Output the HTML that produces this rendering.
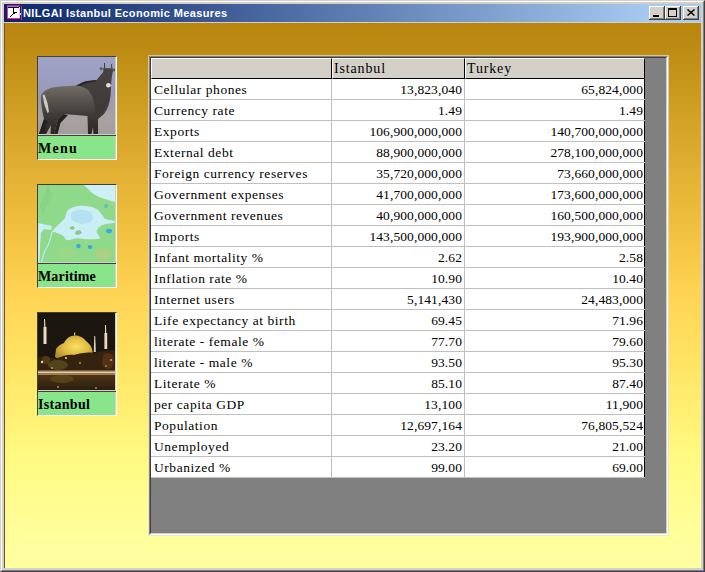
<!DOCTYPE html>
<html><head><meta charset="utf-8">
<style>
*{box-sizing:border-box;margin:0;padding:0}
html,body{width:705px;height:572px;overflow:hidden;background:#D4D0C8}
#win{position:absolute;left:0;top:0;width:705px;height:572px;background:#D4D0C8;
 border-top:1px solid #D4D0C8;border-left:1px solid #D4D0C8;border-right:1px solid #404040;border-bottom:1px solid #404040}
#win2{position:absolute;left:1px;top:1px;width:703px;height:570px;border-top:1px solid #FFFFFF;border-left:1px solid #FFFFFF;border-right:1px solid #808080;border-bottom:1px solid #808080}
#title{position:absolute;left:4px;top:4px;width:697px;height:18px;background:linear-gradient(to right,#0A246A 0%,#A6CAF0 93%)}
#ttext{position:absolute;left:23px;top:7px;height:18px;line-height:18px;font:bold 11px "Liberation Sans",sans-serif;letter-spacing:0.38px;color:#fff;white-space:nowrap}
.cb{position:absolute;top:6px;width:16px;height:14px;background:#D4D0C8;
 box-shadow:inset -1px -1px 0 #404040, inset 1px 1px 0 #FFFFFF, inset -2px -2px 0 #808080}
#client{position:absolute;left:4px;top:23px;width:697px;height:545px;
 background:linear-gradient(to bottom,#B8860E 0px,#BC8A12 22px,#CE9E22 82px,#DDAB30 132px,#EEBC3C 192px,#FFD455 272px,#FFE464 342px,#FFFA80 432px,#FFFF9E 522px,#FFFFA2 545px)}
#lline{position:absolute;left:4px;top:23px;width:1px;height:545px;background:#7A5020}
.panel{position:absolute;left:37px;width:80px;height:104px;border-top:1px solid #404040;border-left:1px solid #404040;border-right:1px solid #FFFFFF;border-bottom:1px solid #FFFFFF}
.pimg{position:absolute;left:0;top:0;width:77px;height:77px;overflow:hidden}
.psep{position:absolute;left:0;top:77px;width:78px;height:1px;background:#D4D0C8}
.psep2{position:absolute;left:0;top:78px;width:78px;height:1px;background:#404040}
.plab{position:absolute;left:0;top:79px;width:77px;height:23px;background:#89E58A;font:bold 14px "Liberation Serif",serif;color:#000;padding-left:0;padding-top:1px;line-height:23px}
.pright{position:absolute;left:77px;top:0;width:1px;height:102px;background:#D4D0C8}
#sp{position:absolute;left:148px;top:55px;width:521px;height:481px;border:1px solid rgba(226,222,212,0.72)}
#sp2{position:absolute;left:0;top:0;width:519px;height:479px;border-top:1px solid #808080;border-left:1px solid #808080;border-right:1px solid #FFFFFF;border-bottom:1px solid #FFFFFF}
#sp3{position:absolute;left:0;top:0;width:517px;height:477px;border-top:1px solid #404040;border-left:1px solid #404040;border-right:1px solid #D4D0C8;border-bottom:1px solid #D4D0C8}
#vp{position:absolute;left:0;top:0;width:515px;height:475px;background:#808080;overflow:hidden}
.h{position:absolute;top:0;height:21px;background:#D4D0C8;border-top:1px solid #fff;border-left:1px solid #fff;border-right:1px solid #000;border-bottom:1px solid #000;font:14px "Liberation Serif",serif;color:#000;line-height:20px;padding-left:1px;letter-spacing:0.85px;white-space:nowrap}
#body{position:absolute;left:0;top:21px;width:494px;height:399px;background:#fff;border-right:1px solid #000;border-bottom:1px solid #000}
.r{position:absolute;left:0;width:494px;height:21px}
.r>div{position:absolute;top:0;height:21px;border-bottom:1px solid #C0C0C0;font:13.5px "Liberation Serif",serif;color:#000;line-height:21px;padding-top:0px;white-space:nowrap}
.c0{left:0;width:181px;border-right:1px solid #C0C0C0;padding-left:3px;letter-spacing:0.55px}
.c1{left:181px;width:133px;border-right:1px solid #C0C0C0;text-align:right;padding-right:2px;letter-spacing:0.1px}
.c2{left:314px;width:180px;text-align:right;padding-right:2px;letter-spacing:0.1px}
</style></head><body>
<div id="win"></div><div id="win2"></div>
<div id="title"></div>
<div id="ttext">NILGAI Istanbul Economic Measures</div>
<svg style="position:absolute;left:5px;top:5px" width="17" height="16" viewBox="0 0 17 16" shape-rendering="crispEdges">
 <rect x="1" y="0" width="15" height="15" fill="#5A005A"/>
 <rect x="2" y="0" width="13" height="1" fill="#A030A0"/>
 <rect x="2" y="1" width="12" height="1" fill="#C060C0"/>
 <rect x="2" y="1" width="1" height="12" fill="#B050B0"/>
 <rect x="3" y="2" width="11" height="11" fill="#FFFFFF"/>
 <rect x="3" y="2" width="11" height="1" fill="#101010"/>
 <rect x="2" y="13" width="13" height="1" fill="#B040B0"/>
 <rect x="8" y="3" width="1" height="4" fill="#000"/>
 <rect x="8" y="7" width="2" height="2" fill="#000"/>
 <rect x="10" y="7" width="2" height="1" fill="#000"/>
 <rect x="7" y="9" width="1" height="1" fill="#000"/>
 <rect x="6" y="10" width="1" height="1" fill="#000"/>
 <rect x="5" y="11" width="1" height="1" fill="#000"/>
 <rect x="14" y="2" width="1" height="11" fill="#E8C8E8"/>
 <rect x="15" y="8" width="1" height="2" fill="#F0B0D0"/>
 <rect x="16" y="1" width="1" height="14" fill="#5A6AA0"/>
</svg>
<div class="cb" style="left:649px"><div style="position:absolute;left:4px;top:9px;width:6px;height:2px;background:#000"></div></div>
<div class="cb" style="left:665px"><div style="position:absolute;left:3px;top:2px;width:9px;height:9px;border:1px solid #000;border-top-width:2px"></div></div>
<div class="cb" style="left:683px"><svg style="position:absolute;left:4px;top:3px" width="8" height="7" viewBox="0 0 8 7"><path d="M0.5 0.5 L7.5 6.5 M7.5 0.5 L0.5 6.5" stroke="#000" stroke-width="1.5"/></svg></div>
<div id="client"></div>
<div id="lline"></div>

<div class="panel" style="top:56px">
 <div class="pimg" id="img1">
  <svg width="77" height="77" viewBox="0 0 77 77">
   <defs>
    <linearGradient id="sky" x1="0" y1="0" x2="0" y2="1"><stop offset="0" stop-color="#A0A2C8"/><stop offset="0.3" stop-color="#9A9DC0"/><stop offset="0.45" stop-color="#979ABA"/><stop offset="0.6" stop-color="#A09CA8"/><stop offset="0.8" stop-color="#A8A2A2"/><stop offset="1" stop-color="#A29C9C"/></linearGradient>
    <linearGradient id="bod" x1="0" y1="0" x2="0" y2="1"><stop offset="0" stop-color="#8C867E"/><stop offset="0.3" stop-color="#6E6962"/><stop offset="0.7" stop-color="#403C39"/><stop offset="1" stop-color="#2A2624"/></linearGradient>
   </defs>
   <rect width="77" height="77" fill="url(#sky)"/>
   <path d="M3 38 C7 32 14 30 22 29.5 L38 28.6 C42 26 46 24 50 23.9 L58.5 23.2 C61 20 63.5 17 65.3 15 L65.3 10.9 L75.2 11.6 L74.5 16 L73.4 22.5 L72.4 39 C72 46 70 52 66 57 L60 62 L60 77 L55.5 77 L55 70 L53.5 77 L50 77 L49.5 59 L38 58 L25 57 L20 62 L16 77 L12.5 77 L13 68 L8 77 L1 77 L6 62 L4 52 L3 44 Z" fill="url(#bod)"/>
   <path d="M38 28.8 C44 26 48 24 52 24 L58.5 23.2 L65.3 15 L65.3 10.9 L75.2 11.6 L73.4 22.5 L72.4 39 C71 46 68 52 64 57 L57 59 C58 50 56 40 50 33 C46 30 42 29 38 28.8 Z" fill="#3C3836" opacity="0.85"/>
   <path d="M39 28.5 C43 26 47 24 51 23.7 L58 23 L58 24.5 C52 25 47 26.5 42 29 Z" fill="#2A2624"/>
   <path d="M66.5 6 L66.6 11 M73.4 7.2 L73.8 11" stroke="#3C3C44" stroke-width="1"/>
   <ellipse cx="63.2" cy="11.8" rx="1.6" ry="1.8" fill="#666462"/>
   <ellipse cx="75.8" cy="13" rx="1.4" ry="1.6" fill="#5A5856"/>
   <path d="M4.5 38 L6.5 37.5 L9.5 46 L11 55 L9.5 56 L6.5 48 Z" fill="#CCC8C2"/>
   <ellipse cx="70.4" cy="28.3" rx="2.4" ry="2.3" fill="#E2DED6"/>
   <path d="M16 77 L20 62 L25 57 L30 58 L22.5 66 L19.5 77 Z M1 77 L6 62 L10 64 L5 77 Z" fill="#262220"/>
  </svg>
 </div>
 <div class="pright"></div>
 <div class="psep"></div><div class="psep2"></div>
 <div class="plab" style="letter-spacing:1.3px">Menu</div>
</div>

<div class="panel" style="top:184px">
 <div class="pimg" id="img2">
  <svg width="77" height="77" viewBox="0 0 77 77">
   <rect width="77" height="77" fill="#8FD98A"/>
   <path d="M10 0 L14 10 L8 22 L4 30 L2 20 Z" fill="#82CE88" opacity="0.5"/>
   <path d="M46 0 L77 0 L77 17 C72 16 68 14 64 13 C60 12 55 9 52 6 Z" fill="#CDF0F6"/>
   <path d="M28.8 26.7 C30 24 36 21.5 41 21 C45 20.5 52 20.5 58 23.8 C61 25 64 30 66.8 33.8 C70 35 74 35.5 77 36 L77 38 C73 38 66 39 62.5 41 C60 43 58 45 59 48 C60 50 62 52 62.5 53.2 C58 54.5 50 55 41 53.2 C36 53 32 55 29.5 55.3 C27 54 26 53 26.7 52.5 L24 50 C20 48 17 47 13.8 46.7 L16 44 C20 40 24 36 26.7 33.8 Z" fill="#CBEEF6"/>
   <path d="M33 28 C38 24 46 24 52 27 C56 30 56 36 50 38 C44 40 36 38 33 34 Z" fill="#AEDCF0" opacity="0.8"/>
   <path d="M0 38 L14 41 L13 45 L6 44 L3 48 L2 62 L1.5 77 L0 77 Z" fill="#C8EEF6"/>
   <path d="M14 47 L11 58 L6 68 L3.5 77" stroke="#C0E8F0" stroke-width="1.2" fill="none"/>
   <path d="M32 42 L35 41 L37 43 L35 45 L32 44 Z M38 46 L42 45 L44 48 L40 50 L37 49 Z" fill="#88C888"/>
   <ellipse cx="71" cy="46" rx="3" ry="2.3" fill="#3AA8E4"/>
   <ellipse cx="40.5" cy="61" rx="2.2" ry="2.3" fill="#3AA4E0"/>
   <ellipse cx="52" cy="62" rx="2.3" ry="2.1" fill="#3AA4E0"/>
   <ellipse cx="68" cy="21" rx="1.8" ry="2.2" fill="#5AB8C0" opacity="0.8"/>
   <ellipse cx="65" cy="69" rx="8" ry="6" fill="#C8C878" opacity="0.5"/>
   <ellipse cx="28" cy="68" rx="10" ry="6" fill="#A8D880" opacity="0.35"/>
  </svg>
 </div>
 <div class="pright"></div>
 <div class="psep"></div><div class="psep2"></div>
 <div class="plab" style="letter-spacing:0.15px">Maritime</div>
</div>

<div class="panel" style="top:312px">
 <div class="pimg" id="img3">
  <svg width="77" height="77" viewBox="0 0 77 77">
   <defs>
    <radialGradient id="dome" cx="0.55" cy="0.45" r="0.65"><stop offset="0" stop-color="#FAE060"/><stop offset="0.5" stop-color="#E0BC44"/><stop offset="1" stop-color="#A88430"/></radialGradient>
    <linearGradient id="refl" x1="0" y1="0" x2="0" y2="1"><stop offset="0" stop-color="#4E3416"/><stop offset="1" stop-color="#2A1E0E"/></linearGradient>
   </defs>
   <rect width="77" height="77" fill="#1C1610"/>
   <path d="M17 44 L18 36 C20 33 23 31 26 30 C28 25.5 32 22.5 37 22.5 C42 22.5 46 25 48 28 C50 30 53 32 54 36 L55 41 L40 43 L22 47 Z" fill="url(#dome)"/>
   <path d="M0 44 C6 42 12 45 18 46 C24 43 30 41 36 42 C42 40 50 39 58 40 C64 38 70 37 77 38 L77 58 L0 58 Z" fill="#36230F"/>
   <ellipse cx="20" cy="52" rx="10" ry="5" fill="#5E5420" opacity="0.7"/>
   <ellipse cx="8" cy="47" rx="4" ry="4" fill="#5A4018" opacity="0.8"/>
   <ellipse cx="70" cy="48" rx="6" ry="8" fill="#5A3418" opacity="0.8"/>
   <rect x="36" y="19.5" width="1.2" height="3" fill="#E0C080"/>
   <path d="M6 6 L7 6 L7.5 14 L8.5 14 L8.5 31 L5.5 31 L5.5 14 L6.2 14 Z" fill="#E8DCC0"/>
   <path d="M56.3 23 L57.2 23 L57.6 31 L57.8 39 L55.8 39 L56 31 Z" fill="#E0D4B8"/>
   <path d="M67 12 L68 12 L68.2 20 L69.2 20 L69.2 36 L66.4 36 L66.4 20 L67 20 Z" fill="#E8DCC0"/>
   <rect x="0" y="57.5" width="77" height="1" fill="#B89868"/>
   <rect x="0" y="58.5" width="77" height="2" fill="#E6D0A8"/>
   <rect x="0" y="60.5" width="77" height="1.5" fill="#A88050"/>
   <rect x="0" y="62" width="77" height="15" fill="url(#refl)"/>
   <ellipse cx="24" cy="66" rx="12" ry="4" fill="#6A5A22" opacity="0.5"/>
   <circle cx="4" cy="49" r="1.2" fill="#F0D8A0"/>
   <circle cx="28" cy="45" r="1" fill="#F8E080"/>
   <circle cx="42" cy="50" r="0.8" fill="#F8E080"/>
   <circle cx="73" cy="47" r="1" fill="#E0A060"/>
   <circle cx="68" cy="53" r="0.8" fill="#F0B070"/>
   <circle cx="20" cy="74" r="0.8" fill="#F0D890"/>
   <circle cx="58" cy="75" r="0.8" fill="#F0D890"/>
   <circle cx="14" cy="55" r="0.8" fill="#F0E0A0"/>
  </svg>
 </div>
 <div class="pright"></div>
 <div class="psep"></div><div class="psep2"></div>
 <div class="plab" style="letter-spacing:0.3px">Istanbul</div>
</div>

<div id="sp"><div id="sp2"><div id="sp3"><div id="vp">
 <div class="h" style="left:0;width:181px"></div>
 <div class="h" style="left:181px;width:133px">Istanbul</div>
 <div class="h" style="left:314px;width:180px">Turkey</div>
 <div id="body">
<div class="r" style="top:0px"><div class="c0">Cellular phones</div><div class="c1">13,823,040</div><div class="c2">65,824,000</div></div>
<div class="r" style="top:21px"><div class="c0">Currency rate</div><div class="c1">1.49</div><div class="c2">1.49</div></div>
<div class="r" style="top:42px"><div class="c0">Exports</div><div class="c1">106,900,000,000</div><div class="c2">140,700,000,000</div></div>
<div class="r" style="top:63px"><div class="c0">External debt</div><div class="c1">88,900,000,000</div><div class="c2">278,100,000,000</div></div>
<div class="r" style="top:84px"><div class="c0">Foreign currency reserves</div><div class="c1">35,720,000,000</div><div class="c2">73,660,000,000</div></div>
<div class="r" style="top:105px"><div class="c0">Government expenses</div><div class="c1">41,700,000,000</div><div class="c2">173,600,000,000</div></div>
<div class="r" style="top:126px"><div class="c0">Government revenues</div><div class="c1">40,900,000,000</div><div class="c2">160,500,000,000</div></div>
<div class="r" style="top:147px"><div class="c0">Imports</div><div class="c1">143,500,000,000</div><div class="c2">193,900,000,000</div></div>
<div class="r" style="top:168px"><div class="c0">Infant mortality %</div><div class="c1">2.62</div><div class="c2">2.58</div></div>
<div class="r" style="top:189px"><div class="c0">Inflation rate %</div><div class="c1">10.90</div><div class="c2">10.40</div></div>
<div class="r" style="top:210px"><div class="c0">Internet users</div><div class="c1">5,141,430</div><div class="c2">24,483,000</div></div>
<div class="r" style="top:231px"><div class="c0">Life expectancy at birth</div><div class="c1">69.45</div><div class="c2">71.96</div></div>
<div class="r" style="top:252px"><div class="c0">literate - female %</div><div class="c1">77.70</div><div class="c2">79.60</div></div>
<div class="r" style="top:273px"><div class="c0">literate - male %</div><div class="c1">93.50</div><div class="c2">95.30</div></div>
<div class="r" style="top:294px"><div class="c0">Literate %</div><div class="c1">85.10</div><div class="c2">87.40</div></div>
<div class="r" style="top:315px"><div class="c0">per capita GDP</div><div class="c1">13,100</div><div class="c2">11,900</div></div>
<div class="r" style="top:336px"><div class="c0">Population</div><div class="c1">12,697,164</div><div class="c2">76,805,524</div></div>
<div class="r" style="top:357px"><div class="c0">Unemployed</div><div class="c1">23.20</div><div class="c2">21.00</div></div>
<div class="r" style="top:378px"><div class="c0">Urbanized %</div><div class="c1">99.00</div><div class="c2">69.00</div></div>
 </div>
</div></div></div></div>
</body></html>
